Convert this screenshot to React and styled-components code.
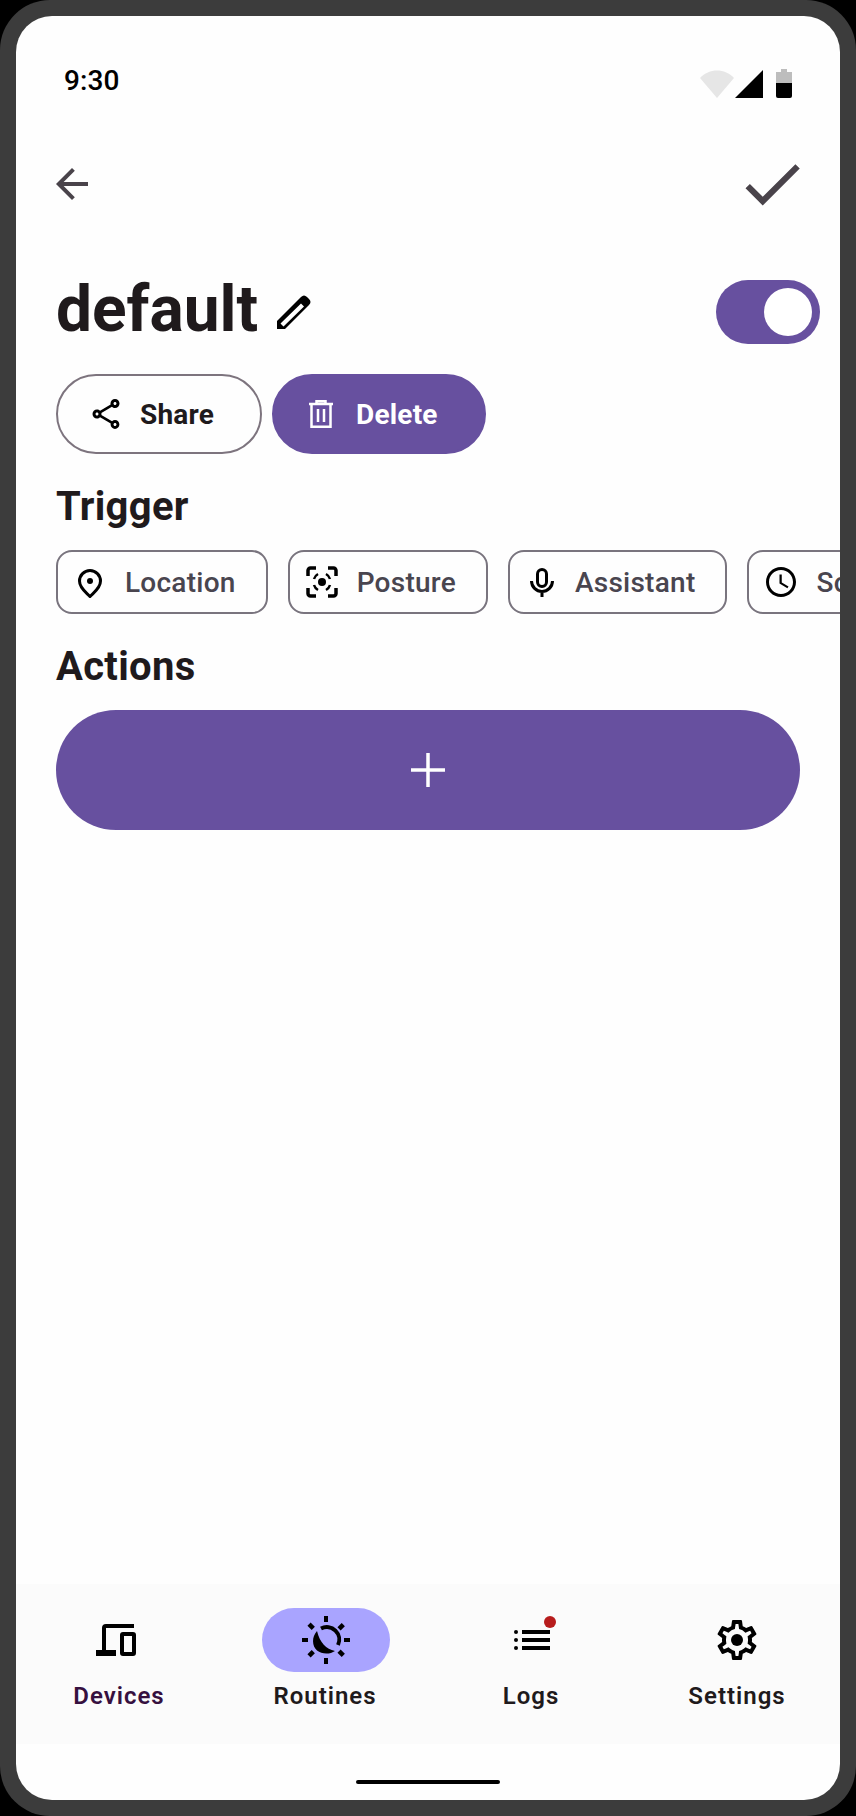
import React from "react";
import styled, { createGlobalStyle } from "styled-components";
import { MdArrowBack, MdCheck, MdOutlineShare, MdOutlineSchedule } from "react-icons/md";

const Global = createGlobalStyle`
  html, body { margin: 0; padding: 0; background: #000; }
  * { box-sizing: border-box; }
  body { font-family: Roboto, "Liberation Sans", sans-serif; }
`;

const Frame = styled.div`
  width: 856px; height: 1816px; padding: 16px;
  background: #3c3c3c; border-radius: 50px;
`;
const Screen = styled.div`
  width: 824px; height: 1784px; background: #fefefe; border-radius: 36px;
  overflow: hidden; display: flex; flex-direction: column;
`;
const StatusBar = styled.div`
  height: 128px; flex: none; display: flex; align-items: center; justify-content: space-between;
  padding: 2px 48px 0;
`;
const Clock = styled.span`
  font-size: 28px; font-weight: 500; color: #000; line-height: 32px; letter-spacing: 0.1px;
`;
const StatusIcons = styled.svg`
  width: 92px; height: 30px; display: block; margin-top: 5px;
`;
const Header = styled.div`
  height: 80px; flex: none; display: flex; align-items: center; justify-content: space-between;
  padding: 0 31px 0 32px; color: #49434a;
`;
const TitleRow = styled.div`
  margin-top: 56px; height: 64px; flex: none; display: flex; align-items: center; justify-content: space-between;
  padding: 0 20px 0 40px;
`;
const TitleGroup = styled.div`
  display: flex; align-items: center; gap: 12px;
`;
const Title = styled.h1`
  margin: 0 0 4px; font-size: 64px; line-height: 60px; font-weight: 700; color: #1f1a1c;
`;
const PencilIcon = styled.svg`
  width: 50px; height: 50px; flex: none; display: block;
`;
const Switch = styled.div`
  width: 104px; height: 64px; border-radius: 32px; background: #67509f;
  display: flex; align-items: center; justify-content: flex-end; padding-right: 8px;
`;
const Knob = styled.div`
  width: 48px; height: 48px; border-radius: 50%; background: #fff;
`;
const ButtonRow = styled.div`
  margin-top: 30px; display: flex; gap: 10px; padding: 0 40px; flex: none;
`;
const PillButton = styled.div`
  height: 80px; border-radius: 40px; display: flex; align-items: center;
  font-size: 28px; font-weight: 700; letter-spacing: 0.2px;
  padding: ${(p) => (p.$filled ? "0 46px 0 35px" : "0 46px 0 30px")};
  gap: ${(p) => (p.$filled ? "23px" : "16px")};
  background: ${(p) => (p.$filled ? "#67509f" : "transparent")};
  color: ${(p) => (p.$filled ? "#fff" : "#1f1a1c")};
  border: 2px solid ${(p) => (p.$filled ? "#67509f" : "#7d747e")};
`;
const SectionTitle = styled.h2`
  margin: ${(p) => p.$top}px 0 0; padding: 0 40px; font-size: 40px; line-height: 48px;
  font-weight: 700; color: #1f1a1c; letter-spacing: 0.3px; flex: none;
`;
const ChipRow = styled.div`
  margin-top: 19px; display: flex; gap: 20px; padding-left: 40px; flex: none;
`;
const Chip = styled.div`
  flex: none; height: 64px; border: 2px solid #79747e; border-radius: 16px; display: flex;
  align-items: center; gap: ${(p) => p.$gap || 17}px; padding: 0 30px 0 14px; color: #49454f;
  font-size: 28px; font-weight: 500; letter-spacing: 0.25px; white-space: nowrap;
`;
const ChipIcon = styled.span`
  width: 36px; height: 36px; flex: none; display: flex; align-items: center; justify-content: center; color: #000;
`;
const AddButton = styled.div`
  margin: 19px 40px 0; height: 120px; border-radius: 60px; background: #67509f; color: #fff;
  display: flex; align-items: center; justify-content: center; flex: none;
`;
const Spacer = styled.div`flex: 1;`;
const Nav = styled.nav`
  height: 160px; flex: none; background: #fbfbfb; display: grid; grid-template-columns: repeat(4, 1fr);
  padding-top: 24px;
`;
const NavItem = styled.div`
  display: flex; flex-direction: column; align-items: center; gap: 8px;
`;
const NavIconBox = styled.div`
  position: relative; width: 128px; height: 64px; border-radius: 32px; display: flex;
  align-items: center; justify-content: center; color: #000;
  margin-left: ${(p) => (p.$active ? "2px" : "0")};
  background: ${(p) => (p.$active ? "#a9a4ff" : "transparent")};
`;
const NavLabel = styled.span`
  font-size: 24px; line-height: 32px; font-weight: 600; letter-spacing: 1px;
  color: ${(p) => p.$color || "#1f1a1c"};
`;
const Badge = styled.span`
  position: absolute; width: 12px; height: 12px; border-radius: 50%; background: #b71c1c;
  left: 77px; top: 8px;
`;
const HomeArea = styled.div`
  flex: 1 0 56px; max-height: 56px; display: flex; justify-content: center; padding-top: 36px;
`;
const HomeBar = styled.div`
  width: 144px; height: 4px; border-radius: 2px; background: #000;
`;
const DevicesSvg = styled.svg`
  display: block; width: 40px; height: 32px; margin-right: 6px;
`;
const LogsSvg = styled.svg`
  display: block; width: 36px; height: 20px; margin-left: 2px;
`;

const LocationIcon = () => (
  <svg width="36" height="36" viewBox="0 0 36 36" fill="none">
    <path d="M18 32.500C15 29 7.500 24.500 7.500 17A10.500 10.500 0 0 1 28.500 17C28.500 24.500 21 29 18 32.500Z" stroke="#000" strokeWidth="3" strokeLinejoin="round" />
    <circle cx="18" cy="17" r="3" fill="#000" />
  </svg>
);

const PostureIcon = () => (
  <svg width="32" height="32" viewBox="0 0 32 32" fill="none" stroke="#000" strokeWidth="3.500">
    <path d="M2 10V4.500A2.500 2.500 0 0 1 4.500 2H10M22 2H27.500A2.500 2.500 0 0 1 30 4.500V10M30 22V27.500A2.500 2.500 0 0 1 27.500 30H22M10 30H4.500A2.500 2.500 0 0 1 2 27.500V22" />
    <path d="M8 13A8.500 8.500 0 0 1 12 8M20 8A8.500 8.500 0 0 1 24 13M24 19A8.500 8.500 0 0 1 20 24M12 24A8.500 8.500 0 0 1 8 19" strokeWidth="2.500" />
    <circle cx="16" cy="16" r="4" fill="#000" stroke="none" />
  </svg>
);

const MicIcon = () => (
  <svg width="36" height="36" viewBox="0 0 36 36" fill="none" stroke="#000">
    <rect x="13.500" y="5.500" width="9" height="17" rx="4.500" strokeWidth="3" />
    <path d="M7.500 17A10.500 10.500 0 0 0 28.500 17M18 27.500V33" strokeWidth="3" />
  </svg>
);

const TrashIcon = () => (
  <svg width="24" height="28" viewBox="0 0 24 28" fill="none" stroke="#fff" strokeWidth="2.500">
    <path d="M0 4H24M7.500 4V1.250H16.500V4" />
    <path d="M2.500 4V26.750H21.500V4" />
    <path d="M9 9V22M15 9V22" />
  </svg>
);

const PlusIcon = () => (
  <svg width="36" height="36" viewBox="0 0 36 36" fill="none" stroke="#fff" strokeWidth="3.500">
    <path d="M18 1V35M1 18H35" />
  </svg>
);

const RoutinesIcon = () => (
  <svg width="48" height="48" viewBox="0 0 48 48" fill="#000">
    <rect x="22" y="0" width="4" height="6" />
    <rect x="22" y="42" width="4" height="6" />
    <rect x="0" y="22" width="6" height="4" />
    <rect x="42" y="22" width="6" height="4" />
    <rect x="7" y="7.500" width="4.500" height="6" transform="rotate(-45 9 10.500)" />
    <rect x="37" y="7.500" width="4.500" height="6" transform="rotate(45 39 10.500)" />
    <rect x="7" y="34.500" width="4.500" height="6" transform="rotate(45 9 37.500)" />
    <rect x="37" y="34.500" width="4.500" height="6" transform="rotate(-45 39 37.500)" />
    <path d="M19 12.500A12.500 12.500 0 0 1 36 29" fill="none" stroke="#000" strokeWidth="4" />
    <path d="M15 15C9.500 21 10 30 15 34.500C20 38.500 28 38.500 33 35C24 33 18 27 15 15Z" />
  </svg>
);

const LogsIcon = () => (
  <LogsSvg viewBox="0 0 36 20" fill="#000">
    <circle cx="2" cy="2" r="2" />
    <circle cx="2" cy="10" r="2" />
    <circle cx="2" cy="18" r="2" />
    <rect x="8" y="0" width="28" height="4" />
    <rect x="8" y="8" width="28" height="4" />
    <rect x="8" y="16" width="28" height="4" />
  </LogsSvg>
);

const DevicesIcon = () => (
  <DevicesSvg viewBox="0 0 40 32" fill="none">
    <path d="M38 2H10A2 2 0 0 0 8 4V28" stroke="#000" strokeWidth="4" />
    <path d="M0 26H20V32H0Z" fill="#000" />
    <rect x="26" y="10" width="12" height="20" rx="1" stroke="#000" strokeWidth="4" />
  </DevicesSvg>
);

const GEAR = "M19.43 12.98c.04-.32.07-.64.07-.98 0-.34-.03-.66-.07-.98l2.11-1.65c.19-.15.24-.42.12-.64l-2-3.46c-.09-.16-.26-.25-.44-.25-.06 0-.12.01-.17.03l-2.49 1c-.52-.4-1.08-.73-1.69-.98l-.38-2.65C14.46 2.18 14.25 2 14 2h-4c-.25 0-.46.18-.49.42l-.38 2.65c-.61.25-1.17.59-1.69.98l-2.49-1c-.06-.02-.12-.03-.18-.03-.17 0-.34.09-.43.25l-2 3.46c-.13.22-.07.49.12.64l2.11 1.65c-.04.32-.07.65-.07.98 0 .33.03.66.07.98l-2.11 1.65c-.19.15-.24.42-.12.64l2 3.46c.09.16.26.25.44.25.06 0 .12-.01.17-.03l2.49-1c.52.4 1.08.73 1.69.98l.38 2.65c.03.24.24.42.49.42h4c.25 0 .46-.18.49-.42l.38-2.65c.61-.25 1.17-.59 1.69-.98l2.49 1c.06.02.12.03.18.03.17 0 .34-.09.43-.25l2-3.46c.12-.22.07-.49-.12-.64l-2.11-1.65zm-1.98-1.71c.04.31.05.52.05.73 0 .21-.02.43-.05.73l-.14 1.13.89.7 1.08.84-.7 1.21-1.27-.51-1.04-.42-.9.68c-.43.32-.84.56-1.25.73l-1.06.43-.16 1.13-.2 1.35h-1.4l-.19-1.35-.16-1.13-1.06-.43c-.43-.18-.83-.41-1.23-.71l-.91-.7-1.06.43-1.27.51-.7-1.21 1.08-.84.89-.7-.14-1.13c-.03-.31-.05-.54-.05-.74s.02-.43.05-.73l.14-1.13-.89-.7-1.08-.84.7-1.21 1.27.51 1.04.42.9-.68c.43-.32.84-.56 1.25-.73l1.06-.43.16-1.13.2-1.35h1.39l.19 1.35.16 1.13 1.06.43c.43.18.83.41 1.23.71l.91.7 1.06-.43 1.27-.51.7 1.21-1.07.85-.89.7.14 1.13z";

const SettingsIcon = () => (
  <svg width="48" height="48" viewBox="0 0 24 24" fill="#000">
    <path d={GEAR} />
    <circle cx="12" cy="12" r="3" />
  </svg>
);

const NAV = [
  { label: "Devices", color: "#36103f", icon: <DevicesIcon /> },
  { label: "Routines", active: true, icon: <RoutinesIcon /> },
  { label: "Logs", badge: true, icon: <LogsIcon /> },
  { label: "Settings", icon: <SettingsIcon /> },
];

export default function App() {
  return (
    <Frame>
      <Global />
      <Screen>
        <StatusBar>
          <Clock>9:30</Clock>
          <StatusIcons viewBox="0 0 92 30">
            <path d="M0 9C9 -1 25 -1 34 9L17 29Z" fill="#e6e6e6" />
            <path d="M35 29L63 1V29Z" fill="#000" />
            <path d="M81 0H87V3H92V14H76V3H81Z" fill="#bdbdbd" />
            <path d="M76 14H92V27a2 2 0 0 1-2 2H78a2 2 0 0 1-2-2Z" fill="#000" />
          </StatusIcons>
        </StatusBar>
        <Header>
          <MdArrowBack size={48} />
          <MdCheck size={74} />
        </Header>
        <TitleRow>
          <TitleGroup>
            <Title>default</Title>
            <PencilIcon viewBox="0 0 50 50">
              <path fillRule="evenodd" d="M7 42V34L31 10Q34 7 37 10L39 12Q42 15 39 18L15 42ZM10.500 36.500L13.500 39.500L34 19.500L31 16.500Z" fill="#000" />
            </PencilIcon>
          </TitleGroup>
          <Switch><Knob /></Switch>
        </TitleRow>
        <ButtonRow>
          <PillButton>
            <MdOutlineShare size={36} color="#000" />
            Share
          </PillButton>
          <PillButton $filled>
            <TrashIcon />
            Delete
          </PillButton>
        </ButtonRow>
        <SectionTitle $top={29}>Trigger</SectionTitle>
        <ChipRow>
          <Chip><ChipIcon><LocationIcon /></ChipIcon>Location</Chip>
          <Chip><ChipIcon><PostureIcon /></ChipIcon>Posture</Chip>
          <Chip $gap={15}><ChipIcon><MicIcon /></ChipIcon>Assistant</Chip>
          <Chip><ChipIcon><MdOutlineSchedule size={36} /></ChipIcon>Schedule</Chip>
        </ChipRow>
        <SectionTitle $top={29}>Actions</SectionTitle>
        <AddButton><PlusIcon /></AddButton>
        <Spacer />
        <Nav>
          {NAV.map((n) => (
            <NavItem key={n.label}>
              <NavIconBox $active={n.active}>
                {n.icon}
                {n.badge && <Badge />}
              </NavIconBox>
              <NavLabel $color={n.color}>{n.label}</NavLabel>
            </NavItem>
          ))}
        </Nav>
        <HomeArea><HomeBar /></HomeArea>
      </Screen>
    </Frame>
  );
}
